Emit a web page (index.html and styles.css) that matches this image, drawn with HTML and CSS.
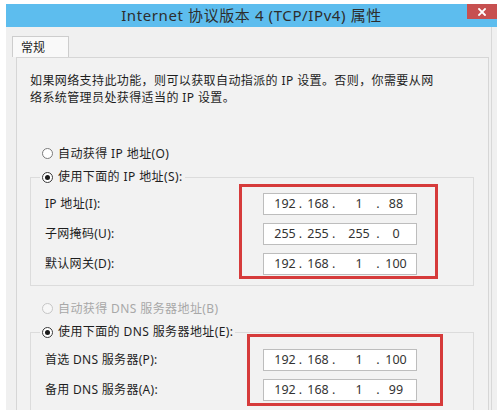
FILE: index.html
```html
<!DOCTYPE html>
<html lang="zh-CN">
<head>
<meta charset="utf-8">
<title>Internet 协议版本 4 (TCP/IPv4) 属性</title>
<link rel="stylesheet" href="styles.css">
</head>
<body>
<div class="window">
  <div class="titlebar">
    <span></span>
    <div class="title">Internet 协议版本 4 (TCP/IPv4) 属性</div>
    <div class="close"><svg width="8" height="8" viewBox="0 0 8 8"><path d="M1 1L7 7M7 1L1 7" stroke="#fff" stroke-width="1.8" stroke-linecap="square"/></svg></div>
  </div>
  <div class="client">
    <div class="tabs"><div class="tab">常规</div></div>
    <div class="panel">
      <p class="desc">如果网络支持此功能，则可以获取自动指派的 IP 设置。否则，你需要从网<br>络系统管理员处获得适当的 IP 设置。</p>

      <div class="radio first"><span class="rb"></span>自动获得 IP 地址(O)</div>

      <fieldset class="group g1">
        <legend><span class="radio"><span class="rb on"></span>使用下面的 IP 地址(S):</span></legend>
        <div class="fields">
          <div class="labels l1">
            <div>IP 地址(I):</div>
            <div>子网掩码(U):</div>
            <div>默认网关(D):</div>
          </div>
          <div class="mark m1">
            <div class="ip"><span>192</span><span>.</span><span>168</span><span class="d2">.</span><span>1</span><span>.</span><span>88</span></div>
            <div class="ip"><span>255</span><span>.</span><span>255</span><span class="d2">.</span><span>255</span><span>.</span><span>0</span></div>
            <div class="ip"><span>192</span><span>.</span><span>168</span><span class="d2">.</span><span>1</span><span>.</span><span>100</span></div>
          </div>
        </div>
      </fieldset>

      <div class="radio second disabled"><span class="rb"></span>自动获得 DNS 服务器地址(B)</div>

      <fieldset class="group g2">
        <legend><span class="radio"><span class="rb on"></span>使用下面的 DNS 服务器地址(E):</span></legend>
        <div class="fields">
          <div class="labels l2">
            <div>首选 DNS 服务器(P):</div>
            <div>备用 DNS 服务器(A):</div>
          </div>
          <div class="mark m2">
            <div class="ip"><span>192</span><span>.</span><span>168</span><span class="d2">.</span><span>1</span><span>.</span><span>100</span></div>
            <div class="ip"><span>192</span><span>.</span><span>168</span><span class="d2">.</span><span>1</span><span>.</span><span>99</span></div>
          </div>
        </div>
      </fieldset>
    </div>
  </div>
</div>
</body>
</html>
```

FILE: styles.css
```css
html, body {
  margin: 0;
  padding: 0;
  height: 410px;
  overflow: hidden;
  background: #ffffff;
}

body {
  font-family: "Noto Sans", "Noto Sans CJK SC", sans-serif;
  font-size: 12px;
  color: #1e1e1e;
}

.window {
  margin: 4px 3px 0 6px;
  height: 406px;
  background: #f0f0f0;
  display: flex;
  flex-direction: column;
}

.titlebar {
  height: 23px;
  background: #5dbdee;
  display: grid;
  grid-template-columns: 30px 1fr 30px;
  flex: none;
}

.title {
  text-align: center;
  font-size: 15px;
  line-height: 23px;
  letter-spacing: 0.6px;
  color: #2d2d2d;
}

.close {
  height: 15px;
  background: #c75050;
  display: flex;
  align-items: center;
  justify-content: center;
}

.client {
  flex: 1;
  padding-top: 9px;
  margin-right: 5px;
  border-right: 1px solid #d8d8d8;
  display: flex;
  flex-direction: column;
}

.tabs {
  display: flex;
  padding-left: 6px;
}

.tab {
  width: 54px;
  height: 20px;
  border: 1px solid #cdcdcd;
  border-bottom: none;
  background: #f9f9f9;
  padding-left: 8px;
  line-height: 21px;
  font-size: 12px;
  box-sizing: content-box;
  width: 47px;
}

.panel {
  flex: 1;
  margin-left: 10px;
  margin-right: 2px;
  border: 1px solid #d6d6d6;
  border-bottom: none;
  background: #f2f2f2;
  padding: 14px 0 0 13px;
}

.desc {
  margin: 0;
  line-height: 17px;
  letter-spacing: 0.4px;
}

.radio {
  display: flex;
  align-items: center;
  gap: 5px;
  height: 20px;
  letter-spacing: 0.4px;
}

legend .radio {
  height: 14px;
}

.radio.first {
  margin: 37px 0 0 12px;
}

.radio.second {
  margin: 12px 0 0 12px;
}

.radio.disabled {
  color: #a8a8a8;
}

.rb {
  width: 9px;
  height: 9px;
  border: 1px solid #7a7a7a;
  border-radius: 50%;
  background: #ffffff;
  display: flex;
  align-items: center;
  justify-content: center;
  flex: none;
}

.disabled .rb {
  border-color: #c6c6c6;
  background: #f7f7f7;
}

.rb.on {
  border-color: #3a3a3a;
}

.rb.on::after {
  content: "";
  width: 5px;
  height: 5px;
  border-radius: 50%;
  background: #1a1a1a;
}

.group {
  margin: 7px 0 0 0;
  padding: 0 0 6px 14px;
  width: 444px;
  box-sizing: border-box;
  border: 1px solid #dcdcdc;
  min-width: 0;
}

.group legend {
  padding: 0 2px;
  margin-left: -5px;
  line-height: 14px;
}

.fields {
  display: flex;
  align-items: flex-start;
}

.labels {
  display: grid;
  grid-auto-rows: 22px;
  row-gap: 8px;
  line-height: 22px;
  letter-spacing: 0.3px;
}

.l1 {
  width: 194px;
  padding-top: 9px;
}

.l2 {
  width: 202px;
  padding-top: 10px;
}

.mark {
  border: 3px solid #d63b3b;
  display: grid;
  row-gap: 8px;
}

.m1 {
  padding: 6px 18px 1px 21px;
}

.m2 {
  margin-top: -5px;
  padding: 12px 23px 2px 13px;
}

.ip {
  width: 154px;
  height: 22px;
  box-sizing: border-box;
  border: 1px solid #bdbdbd;
  background: #ffffff;
  padding-left: 10px;
  display: grid;
  grid-template-columns: 22px 9px 26px 17px 22px 16px 20px;
  font-size: 12.5px;
  line-height: 20px;
  color: #333333;
}

.ip span {
  display: flex;
  justify-content: center;
  white-space: nowrap;
}

.ip span.d2 {
  justify-content: flex-start;
  padding-left: 1px;
}
```
